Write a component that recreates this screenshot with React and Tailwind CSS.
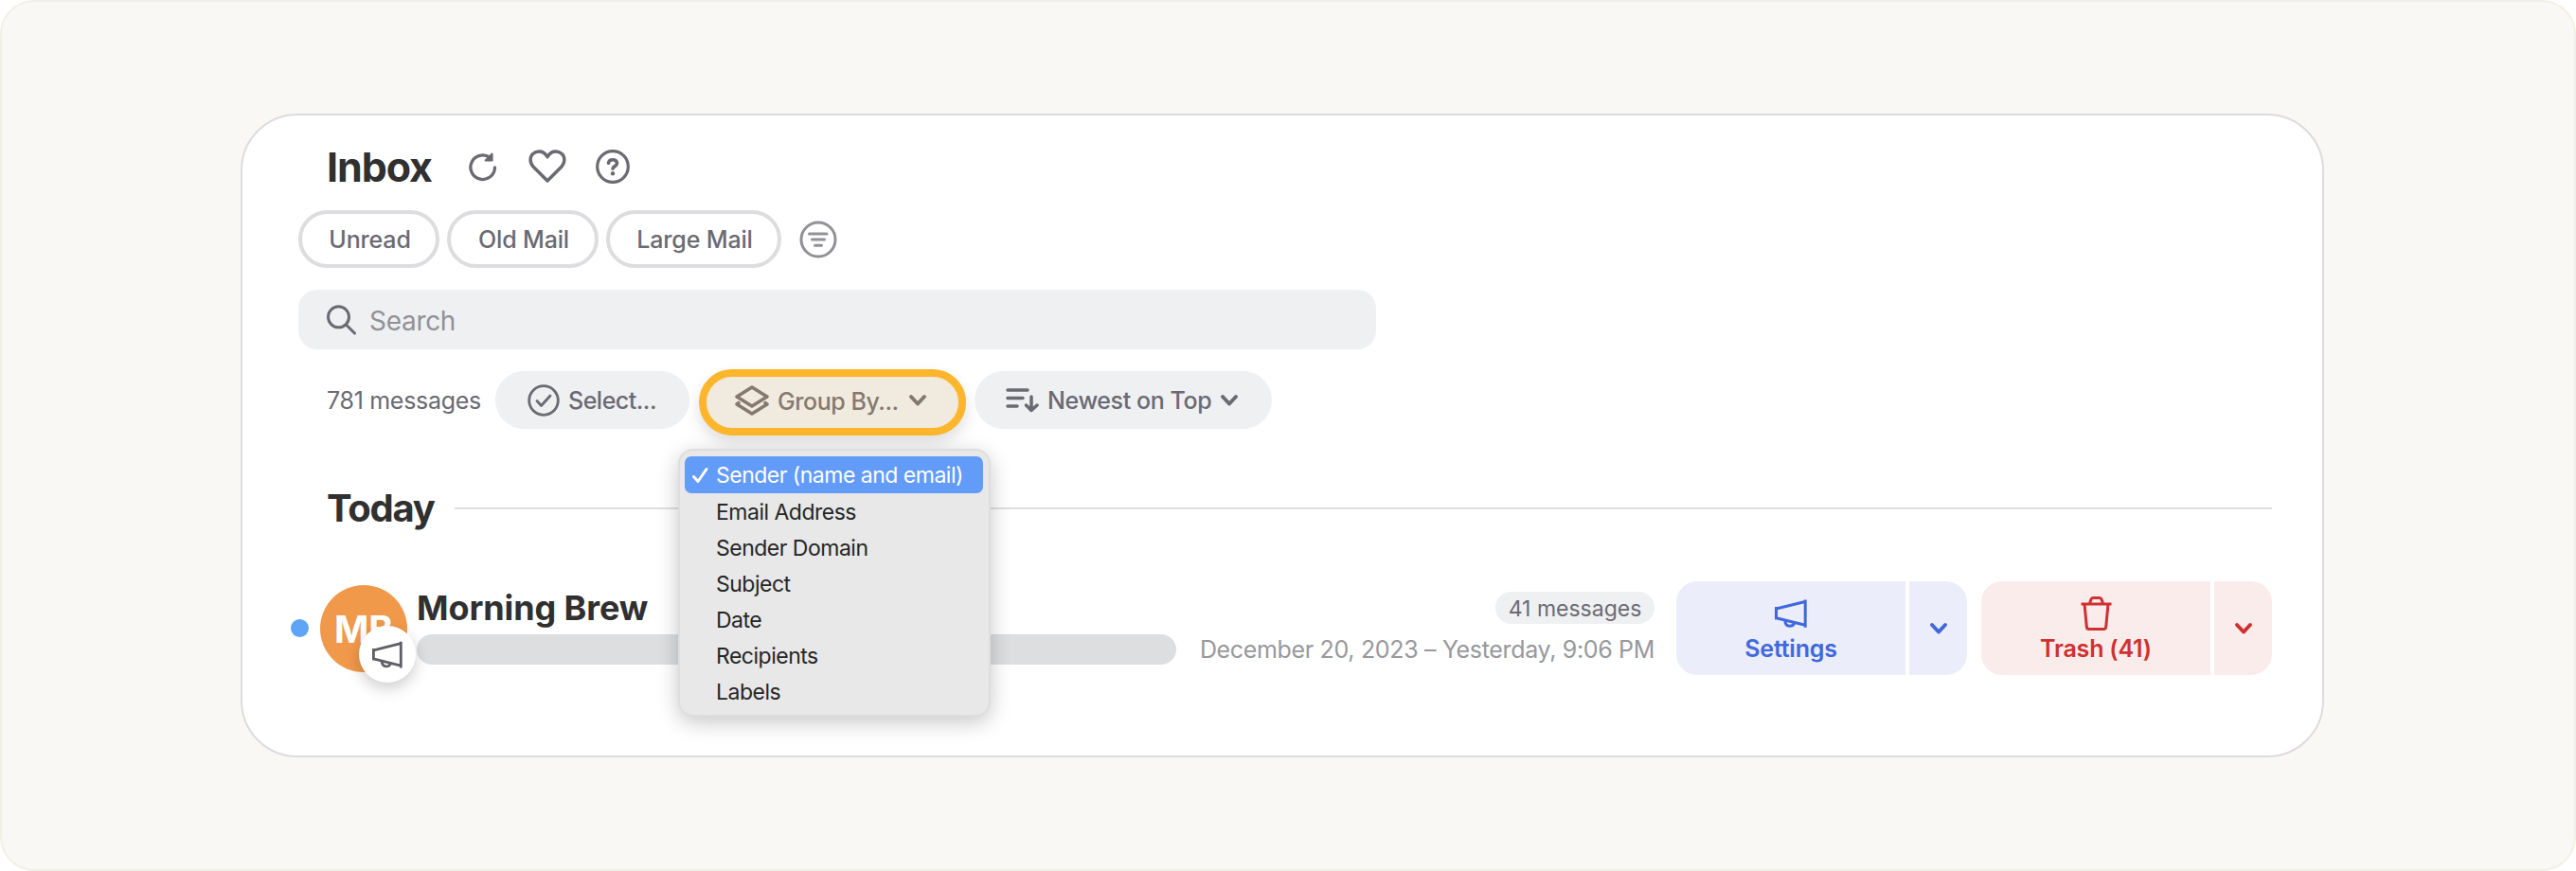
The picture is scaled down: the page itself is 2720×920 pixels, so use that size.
const T = ({ c, children }) => <span className={"whitespace-nowrap leading-none " + c}>{children}</span>;

const Chevron = ({ c }) => (
  <svg className={c} width="20" height="14" viewBox="0 0 20 14" fill="none" stroke="currentColor" strokeWidth="4" strokeLinecap="round" strokeLinejoin="round">
    <path d="M3 3l7 7.5L17 3" />
  </svg>
);
const Megaphone = ({ c }) => (
  <svg className={c} viewBox="0 0 34 30" fill="none" stroke="currentColor" strokeWidth="3">
    <path d="M1.500 8V21.500M1.500 10L32 2.500M32.200 .5V29.800M1.500 19.700L32 27.300M10.800 22c0 4.200 2 6.200 4.900 6.200s4.700-1.700 5-4" />
  </svg>
);
const Refresh = () => (
  <svg width="30" height="32" viewBox="0 0 30 32" fill="none" stroke="currentColor" strokeWidth="3.300" strokeLinecap="round" strokeLinejoin="round">
    <path d="M27.500 17A12.800 12.800 0 1 1 22 6.200" />
    <path d="M24.600 2.500v7h-7z" fill="currentColor" strokeWidth="2" />
  </svg>
);
const Heart = () => (
  <svg width="40" height="36" viewBox="0 0 40 36" fill="none" stroke="currentColor" strokeWidth="3.500" strokeLinejoin="round">
    <path d="M20 33L5 18C1 13.500 1.300 7.500 5 4.300C9 .8 15 1.500 18 5L20 7.800L22 5C25 1.500 31 .8 35 4.300C38.700 7.500 39 13.500 35 18Z" />
  </svg>
);
const Help = () => (
  <svg width="36" height="36" viewBox="0 0 36 36" fill="none" stroke="currentColor" strokeWidth="3.200" strokeLinecap="round">
    <circle cx="18" cy="18" r="16.300" />
    <path d="M13.500 14.300c.3-2.500 2-3.600 4.500-3.600 2.700 0 4.500 1.500 4.500 3.700 0 3.200-4.500 3.200-4.500 5.800" strokeWidth="3.600" />
    <circle cx="18" cy="25.300" r="2.200" fill="currentColor" stroke="none" />
  </svg>
);
const items = ["Email Address", "Sender Domain", "Subject", "Date", "Recipients", "Labels"];

const FilterPill = ({ w, children }) => (
  <div className={"flex h-[61px] items-center justify-center rounded-full border-4 border-[#dddddf] pl-[2px] pt-[2px] " + w}>
    <T c="text-[25px] font-[550] tracking-[-0.15px]">{children}</T>
  </div>
);

const SplitButton = ({ c, half, icon, label }) => (
  <div className={"flex h-[99px] gap-1 " + c}>
    <div className={"flex w-[242px] flex-col items-center rounded-l-[22px] pt-4 " + half}>
      <div className="flex h-9 items-center">{icon}</div>
      <T c="mt-[7px] text-[25px] font-semibold tracking-[-0.2px]">{label}</T>
    </div>
    <div className={"flex w-[61px] items-center justify-center rounded-r-[22px] " + half}>
      <Chevron />
    </div>
  </div>
);

export default function App() {
  return (
    <div className="h-[920px] w-[2720px] overflow-hidden bg-white font-['Inter',sans-serif] text-[#6a6a72]">
      <div className="h-full rounded-[36px] border-2 border-[#f1f0e6] bg-[#f9f8f4] pl-[252px] pt-[118px]">
        <div className="h-[680px] w-[2200px] rounded-[60px] border-2 border-[#dcdcde] bg-white pl-[59px] pr-[53px] pt-[30px]">
          <header className="flex h-[48px] items-center pl-[30px]">
            <T c="w-[150px] text-[43px] font-bold tracking-[-1.1px] text-[#303030]">Inbox</T>
            <div className="flex items-center">
              <Refresh />
              <span className="w-[33px]" />
              <Heart />
              <span className="w-[31px]" />
              <Help />
            </div>
          </header>

          <div className="mt-[22px] flex items-center gap-2">
            <FilterPill w="w-[149px]">Unread</FilterPill>
            <FilterPill w="w-[160px]">Old Mail</FilterPill>
            <FilterPill w="w-[185px]">Large Mail</FilterPill>
            <svg className="ml-[11px] text-[#919196]" width="40" height="40" viewBox="0 0 40 40" fill="none" stroke="currentColor" strokeWidth="3" strokeLinecap="round">
              <circle cx="20" cy="20" r="18" />
              <path d="M10.500 14h18.500M13.500 20h13M16.500 26.300h7" />
            </svg>
          </div>

          <div className="mt-[23px] flex h-[63px] w-[1138px] items-center rounded-[20px] bg-[#eff0f2] pl-[30px]">
            <svg width="32" height="32" viewBox="0 0 32 32" fill="none" stroke="currentColor" strokeWidth="3" strokeLinecap="round">
              <circle cx="12.500" cy="12.800" r="11" />
              <path d="M20.500 21l9 9" />
            </svg>
            <T c="ml-[13px] pt-[2px] text-[28px] tracking-[-0.3px] text-[#919197]">Search</T>
          </div>

          <div className="mt-[21px] flex h-[70px] items-center pl-[30px]">
            <T c="-mt-[3px] w-[178px] text-[25px] tracking-[-0.3px]">781 messages</T>
            <div className="-mt-[5px] flex h-[61px] w-[205px] items-center rounded-full bg-[#eff0f2] pl-[34px]">
              <svg width="34" height="34" viewBox="0 0 34 34" fill="none" stroke="currentColor" strokeWidth="2.800" strokeLinecap="round" strokeLinejoin="round">
                <circle cx="17" cy="17" r="15.300" />
                <path d="M10 17.500l4.500 5L24 12" />
              </svg>
              <T c="ml-[9px] pt-[2px] text-[25px] font-[550] tracking-[-0.5px]">Select...</T>
            </div>
            <div className="ml-[10px] flex h-[70px] w-[282px] items-center rounded-full border-8 border-[#fdb62b] bg-[#f1eadf] pb-1 pl-[30px] text-[#85796f] shadow-[0_8px_16px_rgba(0,0,0,0.13)]">
              <svg width="36" height="32" viewBox="0 0 36 32" fill="none" stroke="currentColor" strokeWidth="3.500" strokeLinejoin="round" strokeLinecap="round">
                <path d="M18 2L34 12L18 22L2 12Z" />
                <path d="M4 18.500L2 20L18 30L34 20L32 18.500" />
              </svg>
              <T c="ml-[9px] pt-[2px] text-[25px] font-[550] tracking-[-0.45px]">Group By...</T>
              <Chevron c="ml-[10px]" />
            </div>
            <div className="-mt-[5px] ml-[9px] flex h-[61px] w-[314px] items-center rounded-full bg-[#eff0f2] pl-[33px]">
              <svg width="35" height="28" viewBox="0 0 35 28" fill="none" stroke="currentColor" strokeWidth="3.500" strokeLinecap="round" strokeLinejoin="round">
                <path d="M2 3h21M2 11.500h16M2 20h10M27 10v14M21.500 19l5.500 5.500 6-5.500" />
              </svg>
              <T c="ml-[9px] pt-[2px] text-[25px] font-[550] tracking-[-0.4px]">Newest on Top</T>
              <Chevron c="ml-[9px]" />
            </div>
          </div>

          <div className="relative">
            <div className="mt-[52px] flex h-[50px] items-center pl-[30px]">
              <T c="w-[135px] text-[40px] font-bold tracking-[-1.3px] text-[#303030]">Today</T>
              <div className="h-[2px] flex-1 bg-[#dfdfe0]" />
            </div>
            <div className="absolute left-[401px] top-[-38px] z-20 h-[283px] w-[330px] rounded-[16px] border-2 border-[#dedede] bg-[#e8e8e8] px-[5px] pt-[6px] text-[23px] text-[#262626] shadow-[0_6px_22px_rgba(0,0,0,0.22)]">
              <div className="flex h-[39px] w-[315px] items-center rounded-[7px] bg-[#629bf8] pl-[7px] text-white">
                <svg width="18" height="18" viewBox="0 0 18 18" fill="none" stroke="currentColor" strokeWidth="3" strokeLinecap="round" strokeLinejoin="round">
                  <path d="M2.500 10.500l4.500 5L16 2.500" />
                </svg>
                <T c="ml-[8px] pt-[2px] tracking-[-0.5px]">Sender (name and email)</T>
              </div>
              {items.map((t) => (
                <div key={t} className="flex h-[38px] items-center pl-[33px] pt-[2px]"><T c="tracking-[-0.5px]">{t}</T></div>
              ))}
            </div>
          </div>

          <div className="mt-[52px] flex h-[107px]">
            <div className="-ml-2 mt-[40px] size-[19px] rounded-full bg-[#5ea4f7]" />
            <div className="relative ml-3 mt-1 flex size-[92px] items-center justify-center rounded-full bg-[#f1994b]">
              <T c="text-[39px] font-bold text-white">MB</T>
              <div className="absolute left-[41px] top-[43px] flex size-[60px] items-center justify-center rounded-full bg-white text-[#5f5f68] shadow-[0_6px_16px_rgba(0,0,0,0.2)]">
                <Megaphone c="h-[29px] w-[32px]" />
              </div>
            </div>
            <div className="ml-[10px] w-[802px] pt-[10px]">
              <T c="block text-[36px] font-bold tracking-[-0.1px] text-[#303030]">Morning Brew</T>
              <div className="mt-[10px] h-8 rounded-full bg-[#dddee0]" />
            </div>
            <div className="ml-auto mr-[23px] flex flex-col items-end pt-[11px]">
              <div className="flex h-[34px] w-[168px] items-center justify-center rounded-full bg-[#eff0f2] pt-[2px]"><T c="text-[23px]">41 messages</T></div>
              <T c="mt-[15px] text-[25px] tracking-[-0.33px] text-[#98989d]">December 20, 2023 – Yesterday, 9:06 PM</T>
            </div>
            <div className="flex gap-[15px]">
              <SplitButton c="text-[#4068dd]" half="bg-[#ebedfb]" icon={<Megaphone c="h-[30px] w-[36px]" />} label="Settings" />
              <SplitButton
                c="text-[#cf3030]"
                half="bg-[#fbecec]"
                icon={
                  <svg width="33" height="38" viewBox="0 0 33 38" fill="none" stroke="currentColor" strokeWidth="3" strokeLinejoin="round">
                    <path d="M.5 9h32M4 9l2.300 24q.2 2.500 2.500 2.500h15.400q2.300 0 2.500-2.500L29 9M9.500 8.500l1.500-4.500q.5-1.500 2-1.500h7q1.500 0 2 1.500l1.500 4.500" />
                  </svg>
                }
                label="Trash (41)"
              />
            </div>
          </div>
        </div>
      </div>
    </div>
  );
}
